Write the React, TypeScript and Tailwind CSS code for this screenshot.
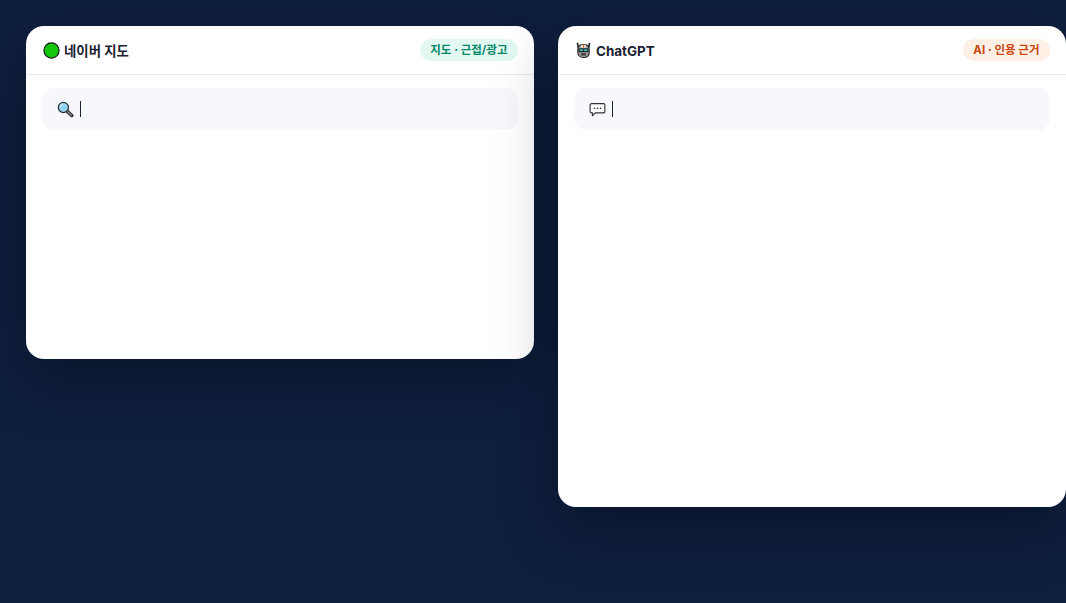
import React from 'react';

const fontStack = "font-['Inter','Noto_Sans_CJK_KR',sans-serif]";

// Emoji in the picture have black outlines, so they are drawn by hand
const GreenDot = () => (
  <svg width="17" height="17" viewBox="0 0 17 17" className="shrink-0">
    <circle cx="8.5" cy="8.5" r="7.6" fill="#16c60c" stroke="#111" strokeWidth="1.1" />
  </svg>
);

const Magnifier = () => (
  <svg width="17" height="17" viewBox="0 0 18 18" className="shrink-0">
    <path d="M10.5 10.5 L15.6 15.4" stroke="#222" strokeWidth="3.6" strokeLinecap="round" />
    <path d="M11 11 L15.4 15.2" stroke="#8e8e8e" strokeWidth="1.5" strokeLinecap="round" />
    <circle cx="6.8" cy="6.8" r="5.4" fill="#92d3f5" stroke="#333" strokeWidth="1.3" />
    <path d="M3.6 6.4 A3.4 3.4 0 0 1 6.4 3.6" fill="none" stroke="#e6f5fd" strokeWidth="1.2" />
  </svg>
);

const Robot = () => (
  <svg width="17" height="17" viewBox="0 0 18 18" className="shrink-0">
    <path d="M2.6 1 L3.4 6 M15.4 1 L14.6 6" stroke="#222" strokeWidth="1.8" />
    <path d="M3 8 C3 4 5 2.6 9 2.6 C13 2.6 15 4 15 8 V11 C15 14.5 12.5 16.4 9 16.4 C5.5 16.4 3 14.5 3 11 Z" fill="#a0a0a0" stroke="#222" strokeWidth="1.2" />
    <rect x="6.5" y="3" width="5" height="3.2" fill="#f1f1f1" />
    <rect x="8.2" y="3" width="1.6" height="3.2" fill="#e27022" />
    <rect x="3.6" y="6.5" width="10.8" height="4.4" rx="1" fill="#20282c" />
    <rect x="5" y="7.7" width="8" height="1.9" fill="#35c6b8" />
    <rect x="8.2" y="7.7" width="1.6" height="1.9" fill="#20282c" />
    <rect x="6.4" y="12.3" width="5.2" height="1.8" rx="0.6" fill="#4a4a4a" stroke="#222" strokeWidth="0.5" />
  </svg>
);

const Speech = () => (
  <svg width="17" height="17" viewBox="0 0 18 18" className="shrink-0">
    <path
      d="M2.6 2.8 H15.4 A1.4 1.4 0 0 1 16.8 4.2 V11.2 A1.4 1.4 0 0 1 15.4 12.6 H6.6 L3.6 15.6 V12.6 H2.6 A1.4 1.4 0 0 1 1.2 11.2 V4.2 A1.4 1.4 0 0 1 2.6 2.8 Z"
      fill="#fff"
      stroke="#333"
      strokeWidth="1.2"
      strokeLinejoin="round"
    />
    <circle cx="5.8" cy="7.7" r="0.9" fill="#333" />
    <circle cx="9" cy="7.7" r="0.9" fill="#333" />
    <circle cx="12.2" cy="7.7" r="0.9" fill="#333" />
  </svg>
);

const Card = ({
  icon,
  title,
  badge,
  badgeClass,
  inputIcon,
  heightClass,
}: {
  icon: React.ReactNode;
  title: string;
  badge: string;
  badgeClass: string;
  inputIcon: React.ReactNode;
  heightClass: string;
}) => (
  <div className={`w-[508px] shrink-0 rounded-[18px] bg-white shadow-[0_20px_60px_rgba(0,0,0,0.35)] ${heightClass}`}>
    {/* Header */}
    <div className="flex h-[49px] items-center justify-between border-b border-[#e8eaf2] pl-[17px] pr-4">
      <div className="flex items-center gap-1 pt-[2px] text-[13.4px] font-bold text-[#1a2233]">
        {icon}
        <span>{title}</span>
      </div>
      <span className={`flex h-[22px] items-center rounded-full px-[10.5px] pt-[2px] text-[11.5px] font-bold ${badgeClass}`}>
        {badge}
      </span>
    </div>
    {/* Search box */}
    <div className="px-4 pt-[13px]">
      <div className="flex h-[42px] items-center gap-[6px] rounded-xl bg-[#f7f8fc] px-[15px]">
        {inputIcon}
        <span className="h-4 w-px bg-[#1a2233]"></span>
      </div>
    </div>
  </div>
);

const App = () => {
  return (
    <div className={`h-[603px] w-[1066px] overflow-hidden bg-[#0f1f3f] ${fontStack}`}>
      <div className="flex items-start gap-6 p-[26px]">
        <Card
          icon={<GreenDot />}
          title="네이버 지도"
          badge="지도 · 근접/광고"
          badgeClass="bg-[#e3f8f0] text-[#05876a]"
          inputIcon={<Magnifier />}
          heightClass="h-[333px]"
        />
        <Card
          icon={<Robot />}
          title="ChatGPT"
          badge="AI · 인용 근거"
          badgeClass="bg-[#fff0e6] text-[#c8470e]"
          inputIcon={<Speech />}
          heightClass="h-[481px]"
        />
      </div>
    </div>
  );
};

export default App;
